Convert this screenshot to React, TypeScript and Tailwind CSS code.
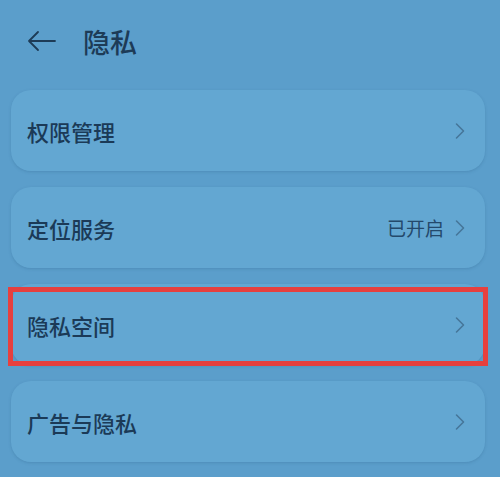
import { ChevronRight } from "lucide-react";

const items = [
  { id: "perm", label: "权限管理" },
  { id: "loc", label: "定位服务", value: "已开启" },
  { id: "space", label: "隐私空间", marked: true },
  { id: "ads", label: "广告与隐私" },
];

export default function App() {
  return (
    <div
      className="w-[500px] h-[477px] overflow-hidden bg-[#5b9ecb] px-[10px]"
      style={{ fontFamily: '"Noto Sans CJK SC", "Noto Sans", sans-serif' }}
    >
      {/* Header */}
      <div className="h-[90px] flex items-center pb-[8px]">
        <svg width="30" height="22" viewBox="0 0 30 22" className="ml-[17px] text-[#1d3b57]" fill="none" stroke="currentColor" strokeWidth="1.8" strokeLinecap="round" strokeLinejoin="round">
          <path d="M28 11H2M11 2L2 11l9 9" />
        </svg>
        <span className="ml-[26px] text-[27px] font-medium text-[#1d3b57] leading-none">隐私</span>
      </div>

      {/* List */}
      <div className="flex flex-col gap-[16px]">
        {items.map((item) => (
          <div key={item.id} className="relative">
            <div className="h-[81px] rounded-[20px] bg-[#63a7d2] shadow-[0_1px_3px_rgba(40,90,130,0.25)] flex items-center pl-[16px] pr-[11px] ml-[1px] mr-[5px]">
              <span className="text-[22px] font-medium text-[#1b3a57] leading-none">{item.label}</span>
              <div className="ml-auto flex items-center">
                {item.value && (
                  <span className="text-[19px] text-[#24496b] leading-none mr-[2px]">{item.value}</span>
                )}
                <ChevronRight className="w-[28px] h-[28px] text-[#3f6b8c] opacity-80" strokeWidth={1.3} />
              </div>
            </div>
            {item.marked && (
              <div className="absolute left-[-2px] right-[2px] top-[3px] bottom-[-1px] border-[5px] border-[#e6403f]" />
            )}
          </div>
        ))}
      </div>
    </div>
  );
}
